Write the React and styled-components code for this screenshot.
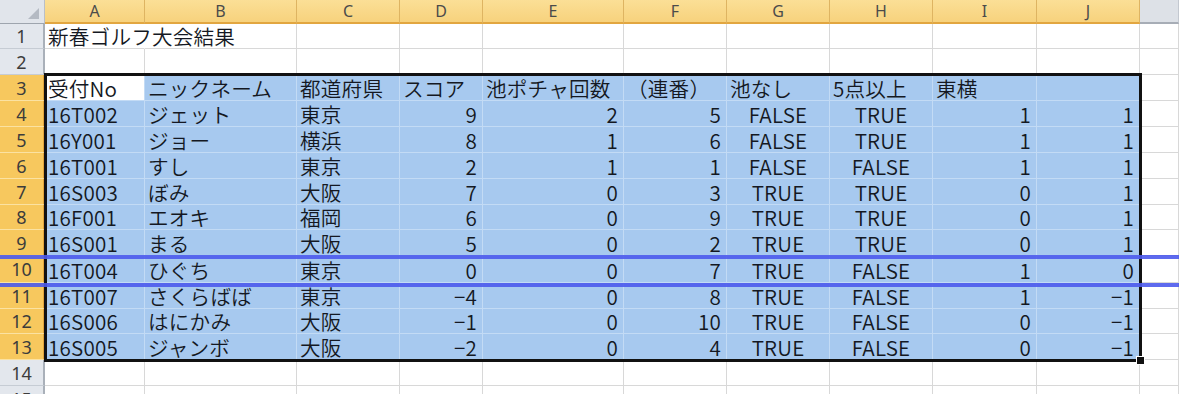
import React from 'react';
import styled, { createGlobalStyle } from 'styled-components';

const GlobalStyle = createGlobalStyle`
  html, body {
    margin: 0;
    padding: 0;
    background: #fff;
    overflow: hidden;
  }
`;

// column widths: row-head, A..J, spare
const COLS = [45, 100, 152, 103, 83, 141, 103, 103, 103, 104, 103];
const LETTERS = ['A', 'B', 'C', 'D', 'E', 'F', 'G', 'H', 'I', 'J'];
const ROW_H = [25, 26, 26, 26, 26, 26, 26, 25, 26, 27, 26, 25, 26, 26, 26];

// align: l = left, r = right, c = centre
const ALIGN = ['l', 'l', 'l', 'r', 'r', 'r', 'c', 'c', 'r', 'r'];

const HEAD = ['受付No', 'ニックネーム', '都道府県', 'スコア', '池ポチャ回数', '（連番）', '池なし', '5点以上', '東横', ''];

const DATA = [
  ['16T002', 'ジェット', '東京', '9', '2', '5', 'FALSE', 'TRUE', '1', '1'],
  ['16Y001', 'ジョー', '横浜', '8', '1', '6', 'FALSE', 'TRUE', '1', '1'],
  ['16T001', 'すし', '東京', '2', '1', '1', 'FALSE', 'FALSE', '1', '1'],
  ['16S003', 'ぼみ', '大阪', '7', '0', '3', 'TRUE', 'TRUE', '0', '1'],
  ['16F001', 'エオキ', '福岡', '6', '0', '9', 'TRUE', 'TRUE', '0', '1'],
  ['16S001', 'まる', '大阪', '5', '0', '2', 'TRUE', 'TRUE', '0', '1'],
  ['16T004', 'ひぐち', '東京', '0', '0', '7', 'TRUE', 'FALSE', '1', '0'],
  ['16T007', 'さくらばば', '東京', '−4', '0', '8', 'TRUE', 'FALSE', '1', '−1'],
  ['16S006', 'はにかみ', '大阪', '−1', '0', '10', 'TRUE', 'FALSE', '0', '−1'],
  ['16S005', 'ジャンボ', '大阪', '−2', '0', '4', 'TRUE', 'FALSE', '0', '−1'],
];

const Sheet = styled.div`
  position: relative;
  display: grid;
  grid-template-columns: ${COLS.map((w) => w + 'px').join(' ')} 1fr;
  grid-template-rows: 24px ${ROW_H.map((h) => h + 'px').join(' ')};
  width: 1179px;
  height: 394px;
  overflow: hidden;
  background: #fff;
  font-family: "Noto Sans CJK JP", "Noto Sans", sans-serif;
`;

const Corner = styled.div`
  position: relative;
  background: #e1e5eb;
  border-right: 1px solid #b9bfc8;
  border-bottom: 1px solid #9ea5ae;
  box-sizing: border-box;

  &::after {
    content: '';
    position: absolute;
    right: 5px;
    bottom: 4px;
    width: 0;
    height: 0;
    border-left: 11px solid transparent;
    border-bottom: 11px solid #b4bac3;
  }
`;

const ColHead = styled.div`
  display: flex;
  align-items: center;
  justify-content: center;
  box-sizing: border-box;
  font-family: "Noto Sans", "DejaVu Sans", sans-serif;
  font-size: 16px;
  color: #4b4b4b;
  background: ${(p) => (p.$sel ? 'linear-gradient(#fbdf96, #f7d27d)' : '#dde1e7')};
  border-right: 1px solid ${(p) => (p.$sel ? '#deb462' : '#c3c8d0')};
  border-bottom: 2px solid ${(p) => (p.$sel ? '#e2a640' : '#a7adb6')};
`;

const RowHead = styled.div`
  display: flex;
  align-items: center;
  justify-content: center;
  box-sizing: border-box;
  font-family: "Noto Sans", "DejaVu Sans", sans-serif;
  font-size: 18px;
  line-height: 20px;
  color: #3c3c3c;
  background: ${(p) => (p.$sel ? '#f7c85e' : '#e3e7ed')};
  border-right: 2px solid ${(p) => (p.$sel ? '#e0a23b' : '#a9b0b9')};
  border-bottom: 1px solid ${(p) => (p.$sel ? '#fbe2a2' : '#c6ccd4')};
`;

const Cell = styled.div`
  display: flex;
  align-items: flex-end;
  justify-content: ${(p) => (p.$align === 'r' ? 'flex-end' : p.$align === 'c' ? 'center' : 'flex-start')};
  box-sizing: border-box;
  padding: 0 ${(p) => (p.$align === 'r' ? '5px' : '0')} 1px ${(p) => (p.$align === 'l' ? '3px' : '0')};
  font-size: 20.6px;
  font-weight: 350;
  line-height: 22px;
  letter-spacing: 0.2px;
  white-space: nowrap;
  overflow: visible;
  color: #141822;
  background: ${(p) => (p.$active ? '#fff' : p.$sel ? '#a7c9ef' : 'transparent')};
  border-right: 1px solid ${(p) => (p.$noRight ? 'transparent' : p.$sel ? '#c3dbf5' : '#d8d8d8')};
  border-bottom: 1px solid ${(p) => (p.$sel ? '#c3dbf5' : '#d8d8d8')};
`;

const Title = styled.span`
  position: relative;
  z-index: 1;
`;

const SelectionFrame = styled.div`
  position: absolute;
  left: 44px;
  top: 73px;
  width: 1098px;
  height: 289px;
  box-sizing: border-box;
  border: 3px solid #111;
  pointer-events: none;
`;

const FillHandle = styled.div`
  position: absolute;
  right: -6px;
  bottom: -6px;
  width: 7px;
  height: 7px;
  background: #111;
  border: 1px solid #fff;
`;

const MarkLine = styled.div`
  position: absolute;
  left: 0;
  right: 0;
  top: ${(p) => p.$top}px;
  height: 4px;
  background: #4c5aec;
  opacity: 0.9;
  pointer-events: none;
`;

function cellsFor(rowNo) {
  if (rowNo === 1) return ['新春ゴルフ大会結果', '', '', '', '', '', '', '', '', ''];
  if (rowNo === 3) return HEAD;
  if (rowNo >= 4 && rowNo <= 13) return DATA[rowNo - 4];
  return Array(10).fill('');
}

export default function App() {
  const rows = ROW_H.map((_, i) => i + 1);

  return (
    <>
      <GlobalStyle />
      <Sheet>
        <Corner />
        {LETTERS.map((l) => (
          <ColHead key={l} $sel>{l}</ColHead>
        ))}
        <ColHead />

        {rows.map((r) => {
          const sel = r >= 3 && r <= 13;
          const vals = cellsFor(r);
          return (
            <React.Fragment key={r}>
              <RowHead $sel={sel}>{r}</RowHead>
              {vals.map((v, c) => (
                <Cell
                  key={c}
                  $sel={sel}
                  $active={r === 3 && c === 0}
                  $align={r === 3 || r === 1 ? 'l' : ALIGN[c]}
                  $noRight={r === 1 && c === 0}
                >
                  {r === 1 && c === 0 ? <Title>{v}</Title> : v}
                </Cell>
              ))}
              <Cell />
            </React.Fragment>
          );
        })}

        <SelectionFrame>
          <FillHandle />
        </SelectionFrame>
        <MarkLine $top={255} />
        <MarkLine $top={283} />
      </Sheet>
    </>
  );
}
